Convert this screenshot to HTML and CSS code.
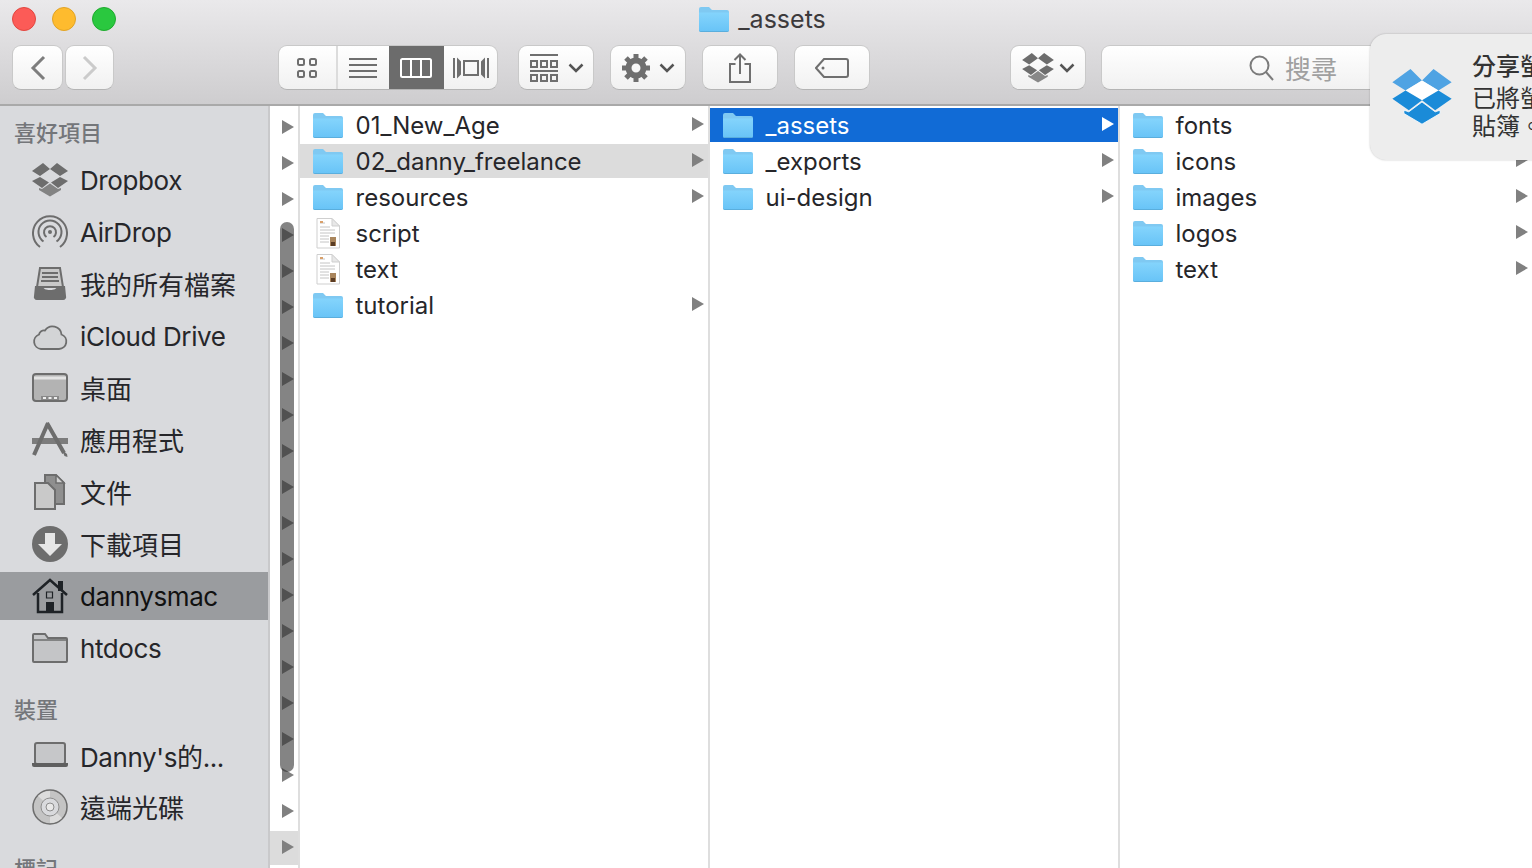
FILE: index.html
```html
<!DOCTYPE html>
<html lang="en">
<head>
  <meta charset="UTF-8">
  <meta name="viewport" content="width=device-width, initial-scale=1.0">
  <title>_assets</title>
  <link rel="stylesheet" href="styles.css">
</head>
<body>
  <svg class="sprite" aria-hidden="true">
    <defs>
      <linearGradient id="folderFront" x1="0" y1="0" x2="0" y2="1">
        <stop offset="0" stop-color="#84d4fc"/>
        <stop offset="1" stop-color="#69c4f7"/>
      </linearGradient>
      <symbol id="i-folder" viewBox="0 0 30 25">
        <path d="M2 0h8l3 3h15a2 2 0 0 1 2 2v18a2 2 0 0 1-2 2H2a2 2 0 0 1-2-2V2a2 2 0 0 1 2-2z" fill="#7fc9f2"/>
        <path d="M0 6h30v17a2 2 0 0 1-2 2H2a2 2 0 0 1-2-2z" fill="#5aaedd"/>
        <path d="M0 5.5h30V23a1 1 0 0 1-1 1H1a1 1 0 0 1-1-1z" fill="url(#folderFront)"/>
      </symbol>
      <symbol id="i-doc" viewBox="0 0 24 31">
        <path d="M1 .5h15l7.500 7.500v22H1z" fill="#fff" stroke="#cfcfcf"/>
        <path d="M16 .5V8h7.500z" fill="#e8e8e8" stroke="#cfcfcf"/>
        <path d="M4 5h5M4 9h10M4 12h15M4 15h15M4 18h9M4 21h9M4 24h9" stroke="#c4c4c4"/>
        <path d="M4 3h3v2H4z" fill="#d9a06a"/>
        <path d="M14 19h6v9h-6z" fill="#a9855c"/>
        <path d="M15 24h4v4h-4z" fill="#5a3c24"/>
      </symbol>
      <symbol id="i-dropbox" viewBox="0 0 36 34">
        <path d="M11 0l7 6-10 7-8-5zM25 0l11 8-8 5-10-7zM8 14l9 5.500L10 25l-10-7zM28 14l8 4-10 7-7-5.500z"/>
        <path d="M18 20.500l8 5.500 3-1v2l-11 6.500L7 27v-2l3 1z" opacity=".8"/>
      </symbol>
      <symbol id="i-airdrop" viewBox="0 0 36 36">
        <g fill="none" stroke="#6d6d6d" stroke-width="2">
          <path d="M8 33A17 17 0 1 1 28 33"/>
          <path d="M11.500 27.500a11.500 11.500 0 1 1 13 0"/>
          <path d="M14.500 23a6 6 0 1 1 7 0"/>
        </g>
        <circle cx="18" cy="18" r="2" fill="#6d6d6d"/>
      </symbol>
      <symbol id="i-tray" viewBox="0 0 36 36">
        <path d="M8 2h20l3 19H5z" fill="#c9c9c9" stroke="#6d6d6d" stroke-width="2"/>
        <path d="M10 7h16M10 11h16M9 15h18" stroke="#6d6d6d" stroke-width="2"/>
        <path d="M3 20h8c0 3 3 4 7 4s7-1 7-4h8l1 10a3 3 0 0 1-3 4H5a3 3 0 0 1-3-4z" fill="#6d6d6d"/>
      </symbol>
      <symbol id="i-cloud" viewBox="0 0 36 36">
        <path d="M9 31h18a7.500 7.500 0 0 0 2.500-14.500A9 9 0 0 0 13 12.500a5 5 0 0 0-6 4A7.500 7.500 0 0 0 9 31z" fill="#d3d4d6" stroke="#6d6d6d" stroke-width="1.800"/>
      </symbol>
      <symbol id="i-desktop" viewBox="0 0 36 36">
        <rect x="1" y="4" width="34" height="27" rx="3" fill="#b3b3b3" stroke="#6d6d6d" stroke-width="2"/>
        <path d="M2 8h32" stroke="#e3e3e3" stroke-width="3"/>
        <path d="M9 26h18v4H9z" fill="#888"/>
        <path d="M11 27h3v2h-3zM16.500 27h3v2h-3zM22 27h3v2h-3z" fill="#eee"/>
      </symbol>
      <symbol id="i-apps" viewBox="0 0 36 36">
        <path d="M0 16h36v6H0z" fill="#7c7c7c"/>
        <path d="M16 1L2 33M15 1l17 30" fill="none" stroke="#6d6d6d" stroke-width="4"/>
        <path d="M30 28l5 4 .5 3-3-1z" fill="#6d6d6d"/>
      </symbol>
      <symbol id="i-docs" viewBox="0 0 36 36">
        <path d="M13 1h11l8 8v21H13z" fill="#8f8f8f" stroke="#6d6d6d" stroke-width="2"/>
        <path d="M24 1v8h8z" fill="#d0d0d0" stroke="#6d6d6d" stroke-width="1.500"/>
        <path d="M3 9h13l7 7v19H3z" fill="#c9c9c9" stroke="#6d6d6d" stroke-width="2"/>
      </symbol>
      <symbol id="i-download" viewBox="0 0 36 36">
        <circle cx="18" cy="18" r="18" fill="#6d6d6d"/>
        <path d="M13 7h10v11h7L18 30 6 18h7z" fill="#e6e6e6"/>
      </symbol>
      <symbol id="i-home" viewBox="0 0 36 36">
        <path d="M1 17L18 2l17 15" fill="none" stroke="#1e2226" stroke-width="2.500"/>
        <path d="M26 3h5v10h-5z" fill="#1e2226"/>
        <path d="M6 15v19h24V15" fill="none" stroke="#1e2226" stroke-width="2.500"/>
        <path d="M14.500 14h6v6h-6z" fill="none" stroke="#1e2226" stroke-width="1.200"/>
        <path d="M14 24h8v10h-8z" fill="#1e2226"/>
      </symbol>
      <symbol id="i-graydir" viewBox="0 0 36 30">
        <path d="M1 2a1 1 0 0 1 1-1h11l3 4h18a1 1 0 0 1 1 1v22a1 1 0 0 1-1 1H2a1 1 0 0 1-1-1z" fill="#c4c5c7" stroke="#6d6d6d" stroke-width="2"/>
        <path d="M2 7h32" stroke="#6d6d6d" stroke-width="1.500"/>
      </symbol>
      <symbol id="i-laptop" viewBox="0 0 36 36">
        <rect x="3" y="6" width="30" height="21" rx="2" fill="#c6c7c9" stroke="#6d6d6d" stroke-width="2"/>
        <path d="M0 26h36v2a2 2 0 0 1-2 2H2a2 2 0 0 1-2-2z" fill="#5f5f5f"/>
      </symbol>
      <symbol id="i-disc" viewBox="0 0 36 36">
        <circle cx="18" cy="18" r="17" fill="#c4c4c4" stroke="#6d6d6d" stroke-width="1.500"/>
        <path d="M18 18L6 7a17 17 0 0 1 12-5zM18 18l12 11a17 17 0 0 1-12 5z" fill="#dcdcdc"/>
        <circle cx="18" cy="18" r="9" fill="#d9dadd" stroke="#8d8d8d"/>
        <circle cx="18" cy="18" r="4" fill="#e8e8e8" stroke="#8d8d8d"/>
      </symbol>
    </defs>
  </svg>

  <div class="window">
    <header class="toolbar">
      <div class="titlebar">
        <div class="lights">
          <span class="light red"></span>
          <span class="light yellow"></span>
          <span class="light green"></span>
        </div>
        <div class="title">
          <svg class="title-folder"><use href="#i-folder"/></svg>
          <span>_assets</span>
        </div>
        <div></div>
      </div>

      <div class="tools">
        <div class="nav-group">
          <div class="btn nav-btn">
            <svg width="16" height="26" viewBox="0 0 16 26"><path d="M14 2L3 13l11 11" fill="none" stroke="#7d7d7d" stroke-width="3"/></svg>
          </div>
          <div class="btn nav-btn nav-next">
            <svg width="16" height="26" viewBox="0 0 16 26"><path d="M2 2l11 11L2 24" fill="none" stroke="#cbcbcb" stroke-width="3"/></svg>
          </div>
        </div>

        <div class="btn views">
          <div class="view view-icons">
            <svg width="22" height="22" viewBox="0 0 22 22"><g fill="none" stroke="#6f6f6f" stroke-width="2"><rect x="2" y="2" width="6" height="6" rx="1.500"/><rect x="14" y="2" width="6" height="6" rx="1.500"/><rect x="2" y="14" width="6" height="6" rx="1.500"/><rect x="14" y="14" width="6" height="6" rx="1.500"/></g></svg>
          </div>
          <div class="view view-list">
            <svg width="30" height="22" viewBox="0 0 30 22"><path d="M1 2h28M1 8h28M1 14h28M1 20h28" stroke="#6f6f6f" stroke-width="2"/></svg>
          </div>
          <div class="view view-columns">
            <svg width="32" height="20" viewBox="0 0 32 20"><rect x="1" y="1" width="30" height="18" rx="1.500" fill="none" stroke="#fff" stroke-width="2"/><path d="M11 1v18M21 1v18" stroke="#fff" stroke-width="2"/></svg>
          </div>
          <div class="view view-flow">
            <svg width="36" height="22" viewBox="0 0 36 22"><g fill="none" stroke="#6f6f6f" stroke-width="2"><path d="M1 1v20M5 3v16l2-2V5zM35 1v20M31 3v16l-2-2V5z"/><rect x="11" y="4" width="14" height="14"/></g></svg>
          </div>
        </div>

        <div class="btn tool arrange">
          <svg width="30" height="28" viewBox="0 0 30 28"><g fill="none" stroke="#6f6f6f" stroke-width="2"><path d="M1 1h28M1 17h28"/><rect x="2" y="7" width="6" height="6"/><rect x="12" y="7" width="6" height="6"/><rect x="22" y="7" width="6" height="6"/><rect x="2" y="21" width="6" height="6"/><rect x="12" y="21" width="6" height="6"/><rect x="22" y="21" width="6" height="6"/></g></svg>
          <svg class="chev" width="16" height="10" viewBox="0 0 16 10"><path d="M1.500 1.500L8 8l6.500-6.500" fill="none" stroke="#555" stroke-width="2.500"/></svg>
        </div>

        <div class="btn tool">
          <svg width="28" height="28" viewBox="0 0 28 28"><circle cx="14" cy="14" r="7.500" fill="none" stroke="#6f6f6f" stroke-width="6"/><path d="M14 0v6M14 22v6M0 14h6M22 14h6M4 4l4.500 4.500M19.500 19.500L24 24M24 4l-4.500 4.500M8.500 19.500L4 24" stroke="#6f6f6f" stroke-width="5"/></svg>
          <svg class="chev" width="16" height="10" viewBox="0 0 16 10"><path d="M1.500 1.500L8 8l6.500-6.500" fill="none" stroke="#555" stroke-width="2.500"/></svg>
        </div>

        <div class="btn tool">
          <svg width="24" height="30" viewBox="0 0 24 30"><path d="M7.500 11H2v18h20V11h-5.500M12 21V2M6.500 7L12 1.500 17.500 7" fill="none" stroke="#6f6f6f" stroke-width="2"/></svg>
        </div>

        <div class="btn tool">
          <svg width="34" height="20" viewBox="0 0 34 20"><path d="M9 1h22a2 2 0 0 1 2 2v14a2 2 0 0 1-2 2H9L1 10z" fill="none" stroke="#6f6f6f" stroke-width="2"/><circle cx="8" cy="10" r="1.500" fill="#6f6f6f"/></svg>
        </div>

        <div class="btn tool dropbox-btn">
          <svg class="dropbox-gray" width="32" height="30"><use href="#i-dropbox"/></svg>
          <svg class="chev" width="16" height="10" viewBox="0 0 16 10"><path d="M1.500 1.500L8 8l6.500-6.500" fill="none" stroke="#555" stroke-width="2.500"/></svg>
        </div>

        <div class="btn search">
          <svg width="25" height="26" viewBox="0 0 25 26"><circle cx="10.500" cy="10.500" r="9" fill="none" stroke="#7b7b7b" stroke-width="2"/><path d="M17 17l7 8" stroke="#7b7b7b" stroke-width="2"/></svg>
          <span>搜尋</span>
        </div>
      </div>
    </header>

    <div class="main">
      <aside class="sidebar">
        <div class="side-head">喜好項目</div>
        <div class="side-item latin"><svg class="side-icon dropbox-gray"><use href="#i-dropbox"/></svg>Dropbox</div>
        <div class="side-item latin"><svg class="side-icon"><use href="#i-airdrop"/></svg>AirDrop</div>
        <div class="side-item cjk"><svg class="side-icon"><use href="#i-tray"/></svg>我的所有檔案</div>
        <div class="side-item latin"><svg class="side-icon"><use href="#i-cloud"/></svg>iCloud Drive</div>
        <div class="side-item cjk"><svg class="side-icon"><use href="#i-desktop"/></svg>桌面</div>
        <div class="side-item cjk"><svg class="side-icon"><use href="#i-apps"/></svg>應用程式</div>
        <div class="side-item cjk"><svg class="side-icon"><use href="#i-docs"/></svg>文件</div>
        <div class="side-item cjk"><svg class="side-icon"><use href="#i-download"/></svg>下載項目</div>
        <div class="side-item latin active"><svg class="side-icon"><use href="#i-home"/></svg>dannysmac</div>
        <div class="side-item latin"><svg class="side-icon"><use href="#i-graydir"/></svg>htdocs</div>
        <div class="side-head next">裝置</div>
        <div class="side-item latin"><svg class="side-icon"><use href="#i-laptop"/></svg>Danny's的...</div>
        <div class="side-item cjk"><svg class="side-icon"><use href="#i-disc"/></svg>遠端光碟</div>
        <div class="side-head next">標記</div>
      </aside>

      <div class="col col-narrow">
        <div class="stub"><i class="arrow"></i></div>
        <div class="stub"><i class="arrow"></i></div>
        <div class="stub"><i class="arrow"></i></div>
        <div class="stub"><i class="arrow"></i></div>
        <div class="stub"><i class="arrow"></i></div>
        <div class="stub"><i class="arrow"></i></div>
        <div class="stub"><i class="arrow"></i></div>
        <div class="stub"><i class="arrow"></i></div>
        <div class="stub"><i class="arrow"></i></div>
        <div class="stub"><i class="arrow"></i></div>
        <div class="stub"><i class="arrow"></i></div>
        <div class="stub"><i class="arrow"></i></div>
        <div class="stub"><i class="arrow"></i></div>
        <div class="stub"><i class="arrow"></i></div>
        <div class="stub"><i class="arrow"></i></div>
        <div class="stub"><i class="arrow"></i></div>
        <div class="stub"><i class="arrow"></i></div>
        <div class="stub"><i class="arrow"></i></div>
        <div class="stub"><i class="arrow"></i></div>
        <div class="stub"><i class="arrow"></i></div>
        <div class="stub open"><i class="arrow"></i></div>
        <div class="scrollbar"></div>
      </div>

      <div class="col col-one">
        <div class="row"><svg class="folder"><use href="#i-folder"/></svg><span class="name">01_New_Age</span><i class="arrow"></i></div>
        <div class="row open"><svg class="folder"><use href="#i-folder"/></svg><span class="name">02_danny_freelance</span><i class="arrow"></i></div>
        <div class="row"><svg class="folder"><use href="#i-folder"/></svg><span class="name">resources</span><i class="arrow"></i></div>
        <div class="row"><svg class="doc"><use href="#i-doc"/></svg><span class="name">script</span></div>
        <div class="row"><svg class="doc"><use href="#i-doc"/></svg><span class="name">text</span></div>
        <div class="row"><svg class="folder"><use href="#i-folder"/></svg><span class="name">tutorial</span><i class="arrow"></i></div>
      </div>

      <div class="col col-two">
        <div class="row selected"><svg class="folder"><use href="#i-folder"/></svg><span class="name">_assets</span><i class="arrow"></i></div>
        <div class="row"><svg class="folder"><use href="#i-folder"/></svg><span class="name">_exports</span><i class="arrow"></i></div>
        <div class="row"><svg class="folder"><use href="#i-folder"/></svg><span class="name">ui-design</span><i class="arrow"></i></div>
      </div>

      <div class="col col-three">
        <div class="row"><svg class="folder"><use href="#i-folder"/></svg><span class="name">fonts</span><i class="arrow"></i></div>
        <div class="row"><svg class="folder"><use href="#i-folder"/></svg><span class="name">icons</span><i class="arrow"></i></div>
        <div class="row"><svg class="folder"><use href="#i-folder"/></svg><span class="name">images</span><i class="arrow"></i></div>
        <div class="row"><svg class="folder"><use href="#i-folder"/></svg><span class="name">logos</span><i class="arrow"></i></div>
        <div class="row"><svg class="folder"><use href="#i-folder"/></svg><span class="name">text</span><i class="arrow"></i></div>
      </div>
    </div>
  </div>

  <div class="notice">
    <svg class="notice-logo" width="60" height="56" viewBox="0 0 36 34">
      <path d="M11 0l7 7-10 6-8-5zM25 0l11 8-8 5-10-6z" fill="#4fa3e3"/>
      <path d="M18 7l10 6-10 6-10-6z" fill="#fff"/>
      <path d="M8 13l10 6-8 6-10-7zM28 13l8 5-10 7-8-6z" fill="#1a8bd8"/>
      <path d="M18 20l8 6 3-1v2l-11 6.500L7 27v-2l3 1z" fill="#1a8bd8" stroke="#fff" stroke-width=".5"/>
    </svg>
    <div class="notice-text">
      <div class="notice-title">分享螢幕截圖</div>
      <div>已將螢幕截圖拷貝到剪</div>
      <div>貼簿。</div>
    </div>
  </div>
</body>
</html>
```

FILE: styles.css
```css
html, body {
  margin: 0;
  height: 100%;
  overflow: hidden;
}

body {
  font-family: Inter, "Noto Sans CJK TC", sans-serif;
  font-size: 26px;
  color: #26262a;
  background-color: #fff;
}

.sprite {
  position: absolute;
  width: 0;
  height: 0;
}

.window {
  height: 868px;
  display: flex;
  flex-direction: column;
}

/* toolbar */
.toolbar {
  box-sizing: border-box;
  height: 106px;
  flex: none;
  background: linear-gradient(#eae9eb, #cecdcf);
  border-bottom: 2px solid #a9a9a9;
}

.titlebar {
  height: 38px;
  display: grid;
  grid-template-columns: 1fr auto 1fr;
  align-items: center;
}

.lights {
  display: flex;
  gap: 16px;
  padding-left: 12px;
}

.light {
  box-sizing: border-box;
  width: 24px;
  height: 24px;
  border-radius: 50%;
}

.red { background-color: #fc5b57; border: 1px solid #e2463f; }
.yellow { background-color: #febb2e; border: 1px solid #e1a325; }
.green { background-color: #2ac83f; border: 1px solid #1fab2e; }

.title {
  display: flex;
  align-items: center;
  gap: 9px;
  padding-right: 7px;
  color: #3c3a3c;
  font-size: 25px;
}

.title-folder {
  width: 30px;
  height: 25px;
}

.tools {
  display: flex;
  gap: 16px;
  padding: 7px 0 0 12px;
}

.btn {
  box-sizing: border-box;
  height: 45px;
  flex: none;
  background: linear-gradient(#ffffff, #f1f1f1);
  border: 1px solid #c9c9c9;
  border-bottom-color: #b4b4b4;
  border-radius: 9px;
  display: flex;
  align-items: center;
  justify-content: center;
}

.nav-group {
  display: flex;
  gap: 2px;
}

.nav-btn {
  width: 51px;
}

.nav-next {
  width: 49px;
}

.views {
  width: 220px;
  margin-left: 148px;
  overflow: hidden;
  justify-content: flex-start;
  margin-right: 4px;
}

.view {
  height: 100%;
  display: flex;
  align-items: center;
  justify-content: center;
}

.view-icons {
  width: 57px;
  border-right: 2px solid #dcdcdc;
}

.view-list {
  width: 51px;
}

.view-columns {
  width: 56px;
  background-color: #6c6c6c;
}

.view-flow {
  width: 53px;
}

.tool {
  width: 76px;
  gap: 9px;
}

.dropbox-btn {
  margin-left: 124px;
  margin-right: -1px;
  gap: 5px;
}

.dropbox-gray {
  fill: #6d6d6d;
}

.search {
  width: 384px;
  gap: 11px;
  color: #a0a0a0;
  box-shadow: inset 0 1px 0 #fff;
}

/* main area */
.main {
  flex: 1;
  display: flex;
  min-height: 0;
}

.sidebar {
  box-sizing: border-box;
  width: 270px;
  flex: none;
  padding-top: 3px;
  background-color: #d9dadd;
  border-right: 2px solid #c9c9cb;
  overflow: hidden;
}

.side-head {
  box-sizing: border-box;
  height: 47px;
  padding: 0 0 3px 14px;
  display: flex;
  align-items: center;
  font-size: 22px;
  font-weight: 500;
  color: #74767a;
}

.side-head.next {
  margin-top: 12px;
  padding-bottom: 0;
}

.side-item {
  box-sizing: border-box;
  height: 48px;
  margin-bottom: 4px;
  padding-left: 32px;
  display: flex;
  align-items: center;
  gap: 12px;
}

.side-item.latin {
  letter-spacing: -0.4px;
}

.side-item.cjk {
  padding-bottom: 2px;
}

.side-item.active {
  background-color: #9a9c9f;
  color: #111;
}

.side-icon {
  width: 36px;
  height: 36px;
  flex: none;
}

.side-item.cjk .side-icon {
  margin-bottom: -2px;
}

.col {
  box-sizing: border-box;
  flex: none;
  padding-top: 2px;
  border-right: 2px solid #dedede;
  overflow: hidden;
  font-size: 24px;
}

.col-narrow {
  position: relative;
  width: 30px;
  padding-top: 5px;
}

.col-one,
.col-two {
  width: 410px;
}

.col-three {
  flex: 1;
  border-right: none;
}

.stub {
  box-sizing: border-box;
  height: 34px;
  margin-bottom: 2px;
  padding: 0 0 2px 12px;
  display: flex;
  align-items: center;
}

.stub .arrow {
  margin-bottom: 0;
}

.stub.open,
.row.open {
  background-color: #dcdcdc;
}

.scrollbar {
  position: absolute;
  top: 116px;
  left: 10px;
  width: 14px;
  height: 550px;
  border-radius: 7px;
  background-color: rgba(50, 50, 50, 0.6);
}

.row {
  height: 34px;
  margin-bottom: 2px;
  padding: 0 4px 0 13px;
  display: flex;
  align-items: center;
}

.row.selected {
  background-color: #116bd6;
  color: #fff;
}

.folder {
  width: 30px;
  height: 25px;
  flex: none;
}

.doc {
  width: 24px;
  height: 31px;
  flex: none;
  margin: 0 3px;
}

.name {
  flex: 1;
  margin-left: 12.5px;
  white-space: nowrap;
}

.arrow {
  display: block;
  width: 12px;
  height: 14px;
  flex: none;
  background-color: #808080;
  clip-path: polygon(0 0, 100% 50%, 0 100%);
  margin-bottom: 2px;
}

.row.selected .arrow {
  background-color: #fff;
}

/* dropbox notification */
.notice {
  position: absolute;
  top: 34px;
  left: 1370px;
  width: 300px;
  height: 126px;
  box-sizing: border-box;
  padding: 19px 0 0 22px;
  display: flex;
  gap: 20px;
  background-color: #ededed;
  border-radius: 16px;
  box-shadow: 0 0 2px rgba(0, 0, 0, 0.25);
  font-size: 24px;
  line-height: 28px;
  color: #333;
  white-space: nowrap;
}

.notice-logo {
  flex: none;
  margin-top: 16px;
}

.notice-title {
  font-weight: 500;
  margin-bottom: 4px;
}
```
